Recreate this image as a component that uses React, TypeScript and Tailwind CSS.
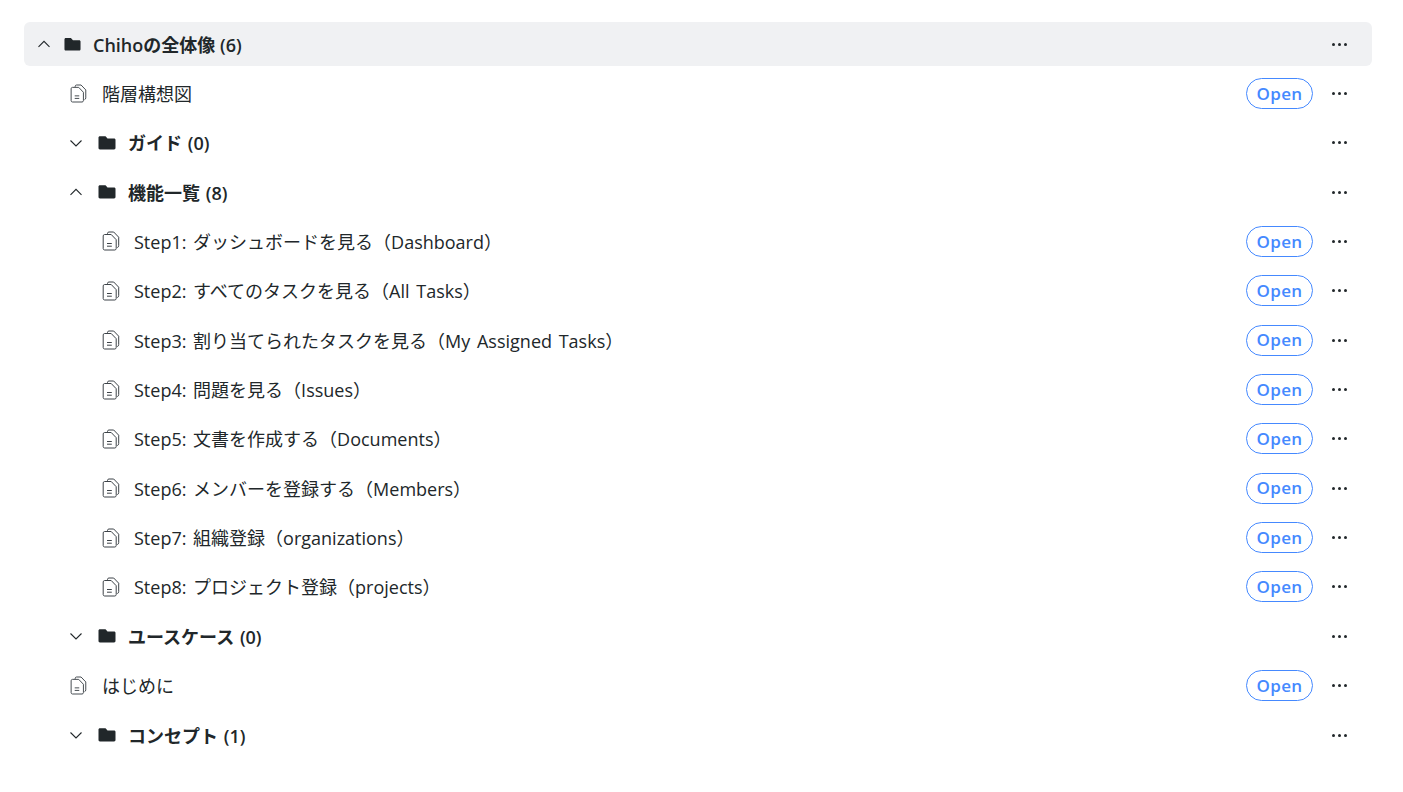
import React from "react";

function Chevron({ up }: { up?: boolean }) {
  return (
    <svg width="16" height="16" viewBox="0 0 16 16" fill="none" stroke="#21272a" strokeWidth="1.1">
      <path d={up ? "M2.5 10.8 8 5.3l5.5 5.5" : "M2.5 5.5 8 11l5.5-5.5"} />
    </svg>
  );
}

function Folder({ size }: { size: number }) {
  return (
    <svg width={size} height={size} viewBox="0 0 18 18" fill="#21272a">
      <path d="M0.5 3.6C0.5 2.8 1.1 2.2 1.9 2.2h4.9c.4 0 .7.1 1 .4L9.5 4.4h6.6c.8 0 1.4.6 1.4 1.4v8.2c0 .8-.6 1.4-1.4 1.4H1.9c-.8 0-1.4-.6-1.4-1.4z" />
    </svg>
  );
}

function Doc({ small }: { small?: boolean }) {
  return (
    <svg width={small ? 17 : 18} height={small ? 19 : 20} viewBox="0 0 18 20" fill="none" stroke="#3d4348" strokeWidth="1">
      <path d="M5.5 3.5V2.4c0-.8.6-1.4 1.4-1.4h4.8l5 5.2v8.4c0 1-.5 1.7-1.4 2" />
      <path d="M2.6 3.5h6.6l5 5.2v8.9c0 .8-.6 1.4-1.4 1.4H2.6c-.8 0-1.4-.6-1.4-1.4V4.9c0-.8.6-1.4 1.4-1.4z" fill="#fff" />
      <path d="M5 12.5h4.8M5 15.2h4.8" />
    </svg>
  );
}

function Dots() {
  return (
    <button className="flex w-[53px] justify-center gap-[3px]">
      <span className="h-[3px] w-[3px] rounded-full bg-[#21272a]" />
      <span className="h-[3px] w-[3px] rounded-full bg-[#21272a]" />
      <span className="h-[3px] w-[3px] rounded-full bg-[#21272a]" />
    </button>
  );
}

function Open() {
  return (
    <span className="flex h-[31px] w-[67px] items-center justify-center rounded-full border border-[#4589ff] text-[17px] font-semibold tracking-[0.3px] text-[#4589ff]">
      Open
    </span>
  );
}

function FolderRow({ label, open, depth, active }: { label: string; open?: boolean; depth: 0 | 1; active?: boolean }) {
  return (
    <div className={`flex h-11 items-center rounded-md pr-[6px] ${active ? "bg-[#f0f1f3]" : ""} ${depth === 0 ? "pl-3" : "pl-[44px]"}`}>
      <Chevron up={open} />
      <span className={depth === 0 ? "ml-[12px]" : "ml-[14px]"}><Folder size={depth === 0 ? 17 : 18} /></span>
      <span className={`ml-[12px] flex-1 pt-[2px] text-[18px] font-semibold leading-[27px] text-[#21272a] ${depth === 1 ? "[word-spacing:1px]" : ""}`}>{label}</span>
      <Dots />
    </div>
  );
}

function DocRow({ label, depth }: { label: string; depth: 1 | 2 }) {
  return (
    <div className={`flex h-11 items-center pr-[6px] ${depth === 1 ? "pl-[46px]" : "pl-[78px]"}`}>
      <Doc small={depth === 1} />
      <span className={`flex-1 pt-[2px] text-[18px] leading-[27px] text-[#21272a] [word-spacing:2px] ${depth === 1 ? "ml-[15px]" : "ml-[14px]"}`}>{label}</span>
      <Open />
      <Dots />
    </div>
  );
}

export default function App() {
  const steps = [
    "Step1: ダッシュボードを見る（Dashboard）",
    "Step2: すべてのタスクを見る（All Tasks）",
    "Step3: 割り当てられたタスクを見る（My Assigned Tasks）",
    "Step4: 問題を見る（Issues）",
    "Step5: 文書を作成する（Documents）",
    "Step6: メンバーを登録する（Members）",
    "Step7: 組織登録（organizations）",
    "Step8: プロジェクト登録（projects）",
  ];
  return (
    <div className="min-h-[792px] bg-white pl-6 pr-[31px] pt-[22px] font-['Open_Sans','Noto_Sans_CJK_JP',sans-serif]">
      <div className="flex flex-col gap-[5.36px]">
        <FolderRow label="Chihoの全体像 (6)" open depth={0} active />
        <DocRow label="階層構想図" depth={1} />
        <FolderRow label="ガイド (0)" depth={1} />
        <FolderRow label="機能一覧 (8)" open depth={1} />
        {steps.map((s) => (
          <DocRow key={s} label={s} depth={2} />
        ))}
        <FolderRow label="ユースケース (0)" depth={1} />
        <DocRow label="はじめに" depth={1} />
        <FolderRow label="コンセプト (1)" depth={1} />
      </div>
    </div>
  );
}
